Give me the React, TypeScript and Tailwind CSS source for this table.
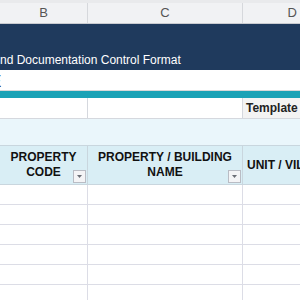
import React from "react";

const font = { fontFamily: '"Liberation Sans", Arial, sans-serif' };

// little Excel-style autofilter button
const FilterButton = () => (
  <span className="absolute right-[1px] bottom-[1px] flex h-[13px] w-[13px] items-center justify-center border border-[#b9bcc4] bg-[#f4f4f6]">
    <svg width="5" height="3" viewBox="0 0 5 3">
      <path d="M0 0h5L2.5 3z" fill="#6b6e76" />
    </svg>
  </span>
);

const App = () => {
  const rows = [0, 1, 2, 3, 4, 5];

  return (
    <div className="w-[300px] h-[300px] overflow-hidden bg-white" style={font}>
      {/* column letters */}
      <div className="flex h-[24px] bg-[#f1f2f4] border-t-[3px] border-t-[#e9eaec] border-b border-b-[#c9cbd0] text-[13px] text-[#555]">
        <div className="w-[88px] shrink-0 flex items-center justify-center border-r border-[#d6d8dc]">B</div>
        <div className="w-[155px] shrink-0 flex items-center justify-center border-r border-[#d6d8dc]">C</div>
        <div className="flex-1 flex items-center justify-end pr-[3px]">D</div>
      </div>

      {/* title band */}
      <div className="h-[46px] bg-[#1f3a5d] flex items-end pb-[3px]">
        <span className="text-white text-[12px] whitespace-nowrap leading-[14px]">
          nd Documentation Control Format
        </span>
      </div>

      {/* subtitle row */}
      <div className="h-[21px] bg-white relative overflow-hidden border-b border-[#d8d8d8]">
        <span className="absolute left-[-10px] top-[2px] text-[17px] leading-[20px] text-[#222]">E</span>
      </div>

      {/* accent bar */}
      <div className="h-[7px] bg-[#1ba2b6]" />

      {/* template row */}
      <div className="grid grid-cols-[88px_155px_200px] h-[21px] border-b border-[#d5d8de]">
        <div className="border-r border-[#d5d8de] bg-white" />
        <div className="border-r border-[#d5d8de] bg-white" />
        <div className="bg-[#f3f3f3] flex items-center pl-[3px] text-[12px] font-bold text-[#222] whitespace-nowrap">
          Template
        </div>
      </div>

      {/* spacer band */}
      <div className="h-[26px] bg-[#eaf6fb]" />

      {/* table header */}
      <div className="grid grid-cols-[88px_155px_200px] h-[40px] bg-[#d9eef5] border-y border-[#c9d6de] text-[12px] font-bold text-[#111] leading-[15px]">
        <div className="relative flex items-center justify-center text-center border-r border-[#c9d6de]">
          <span>
            PROPERTY
            <br />
            CODE
          </span>
          <FilterButton />
        </div>
        <div className="relative flex items-center justify-center text-center border-r border-[#c9d6de]">
          <span>
            PROPERTY / BUILDING
            <br />
            NAME
          </span>
          <FilterButton />
        </div>
        <div className="flex items-center pl-[4px] whitespace-nowrap">UNIT / VILLA NO.</div>
      </div>

      {/* empty data rows */}
      {rows.map((r) => (
        <div
          key={r}
          className="grid grid-cols-[88px_155px_200px] h-[20px] border-b border-[#dcdde6]"
        >
          <div className="border-r border-[#dcdde6]" />
          <div className="border-r border-[#dcdde6]" />
          <div />
        </div>
      ))}
    </div>
  );
};

export default App;
